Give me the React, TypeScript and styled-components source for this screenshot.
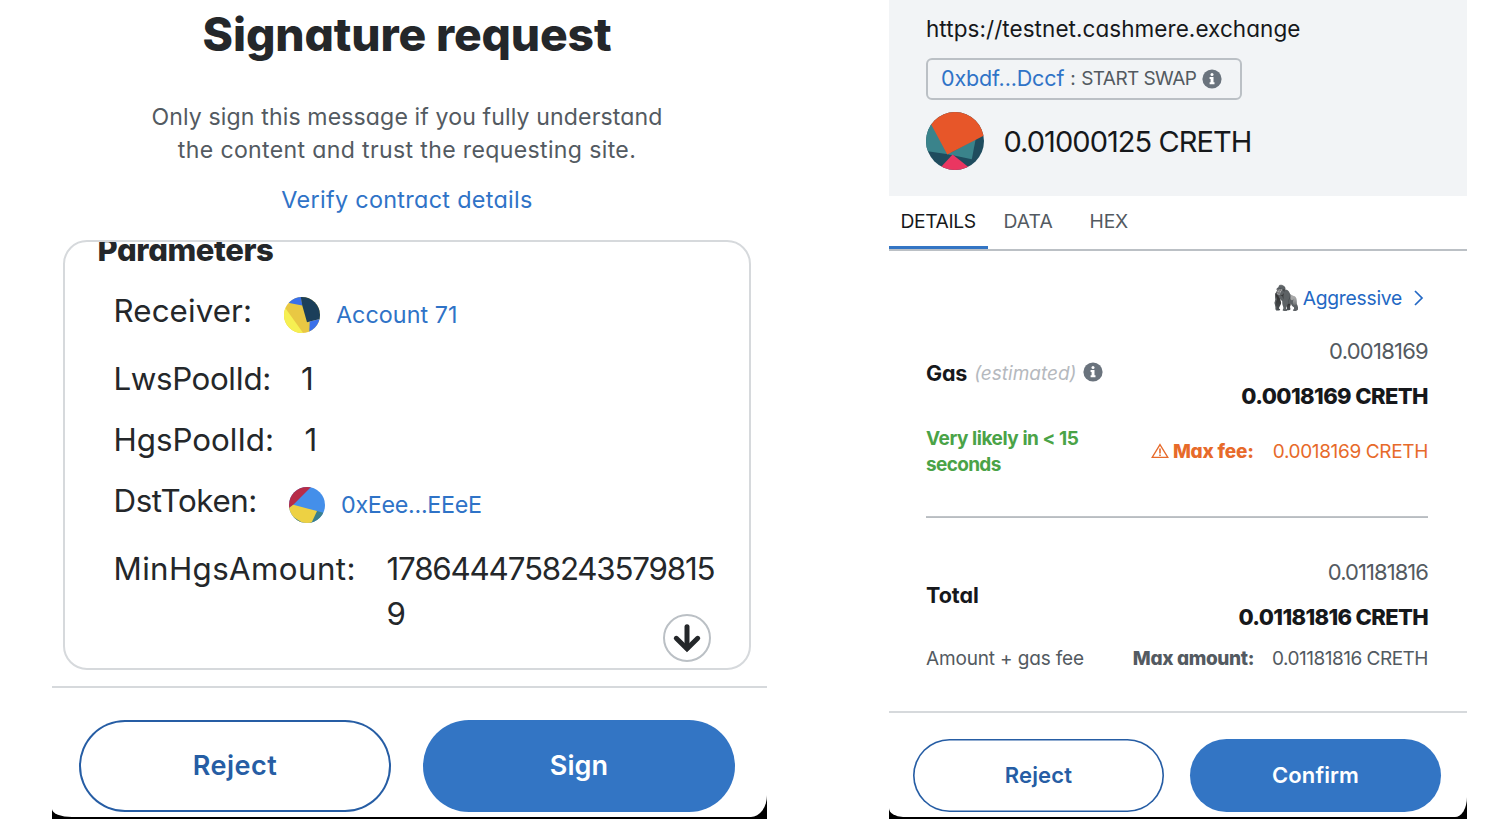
import React from 'react';
import styled, { createGlobalStyle } from 'styled-components';

const GlobalStyle = createGlobalStyle`
  * { box-sizing: border-box; }
  body {
    margin: 0;
    background: #fff;
    font-family: Inter, "Liberation Sans", sans-serif;
    font-feature-settings: "cv11";
    overflow: hidden;
  }
`;

const color = {
  ink: '#24272a',
  black: '#16181b',
  muted: '#535a61',
  link: '#2f73c7',
  primary: '#3375c4',
  outline: '#265da4',
  border: '#d6d9dc',
  borderStrong: '#bbc0c5',
  faint: '#b5b9be',
  success: '#4aa347',
  warning: '#e76a2a',
};

const Text = styled.span<{
  $size: number;
  $line?: number;
  $weight?: number;
  $color?: string;
  $track?: number;
  $italic?: boolean;
}>`
  display: block;
  margin: 0;
  white-space: nowrap;
  font-size: ${(p) => p.$size}px;
  line-height: ${(p) => (p.$line ? `${p.$line}px` : '1.3')};
  font-weight: ${(p) => p.$weight ?? 400};
  color: ${(p) => p.$color ?? color.ink};
  letter-spacing: ${(p) => p.$track ?? 0}px;
  font-style: ${(p) => (p.$italic ? 'italic' : 'normal')};
`;

const Page = styled.main`
  display: grid;
  grid-template-columns: 715px 578px;
  column-gap: 122px;
  padding-left: 52px;
  height: 819px;
`;

const Backdrop = styled.section`
  background: #000;
  height: 819px;
  padding-bottom: 2px;
`;

const Sheet = styled.div<{ $corners: string }>`
  display: flex;
  flex-direction: column;
  height: 817px;
  background: #fff;
  border-radius: ${(p) => p.$corners};
`;

const Intro = styled.header`
  display: flex;
  flex-direction: column;
  align-items: center;
  height: 240px;
  padding: 2px 5px 0 0;
`;

const Message = styled.div`
  display: flex;
  flex-direction: column;
  align-items: center;
  margin: 35px 0 16px;
`;

const Card = styled.div`
  position: relative;
  height: 430px;
  margin: 0 16px 0 11px;
  padding: 0 0 0 32.5px;
  border: 2px solid ${color.border};
  border-radius: 24px;
  overflow: hidden;
`;

const CardTitle = styled.div`
  margin: -15px 0 16px;
`;

const Rows = styled.div`
  display: flex;
  flex-direction: column;
  gap: 16px;
  padding-left: 16px;
`;

const Row = styled.div<{ $tall?: boolean }>`
  display: flex;
  height: ${(p) => (p.$tall ? 52 : 45)}px;
  padding-top: 1px;
`;

const RowLabel = styled.div<{ $width: number }>`
  flex: none;
  width: ${(p) => p.$width}px;
`;

const Address = styled.div`
  display: flex;
  align-items: center;
  gap: 16px;
  height: 52px;
`;

const ScrollDown = styled.button`
  position: absolute;
  right: 38px;
  bottom: 6px;
  width: 48px;
  height: 48px;
  padding: 0;
  border: 2px solid ${color.borderStrong};
  border-radius: 50%;
  background: #fff;
`;

const Footer = styled.footer<{ $compact?: boolean }>`
  display: flex;
  margin-top: ${(p) => (p.$compact ? -1 : 16)}px;
  gap: ${(p) => (p.$compact ? 26 : 32)}px;
  padding: ${(p) => (p.$compact ? '26px 26px 0 24px' : '32px 32px 0 27px')};
  border-top: 2px solid ${color.border};
`;

const Button = styled.button<{ $primary?: boolean; $compact?: boolean }>`
  flex: 1;
  display: flex;
  align-items: center;
  justify-content: center;
  height: ${(p) => (p.$compact ? 73 : 92)}px;
  padding: 0 0 ${(p) => (p.$compact ? 2 : 0)}px;
  border: 0;
  border-radius: 46px;
  background: ${(p) => (p.$primary ? color.primary : '#fff')};
  box-shadow: ${(p) =>
    p.$primary ? 'none' : `inset 0 0 0 ${p.$compact ? 1.6 : 2}px ${color.outline}`};
  font-family: inherit;
  font-feature-settings: inherit;
`;

const Summary = styled.header`
  display: flex;
  flex-direction: column;
  height: 196px;
  padding: 14px 37px 0;
  background: #f2f4f6;
`;

const Chip = styled.div`
  display: flex;
  align-items: center;
  align-self: flex-start;
  width: 316px;
  height: 42px;
  margin-top: 14px;
  padding-left: 13px;
  border: 2px solid ${color.borderStrong};
  border-radius: 6px;
`;

const ChipAction = styled.div`
  display: flex;
  align-items: center;
  gap: 5.5px;
  margin-left: 6px;

  svg { margin-top: -1px; }
`;

const Amount = styled.div`
  display: flex;
  align-items: center;
  gap: 19.5px;
  margin-top: 12.4px;
`;

const Tabs = styled.nav`
  display: flex;
  height: 55px;
  border-bottom: 2px solid ${color.borderStrong};
`;

const Tab = styled.div<{ $active?: boolean; $width: number; $pad: number }>`
  width: ${(p) => p.$width}px;
  padding: 12px 0 0 ${(p) => p.$pad}px;
  border-bottom: 3px solid ${(p) => (p.$active ? color.primary : 'transparent')};
`;

const Details = styled.div`
  height: 461px;
  padding: 33px 39px 0 37px;
`;

const Speed = styled.div`
  display: flex;
  align-items: center;
  justify-content: flex-end;
  height: 27px;
  padding-right: 4px;
`;

const Emoji = styled.span`
  width: 31px;
  font: 24px/28px "Noto Color Emoji", sans-serif;
`;

const Spread = styled.div<{ $top: number; $height: number }>`
  display: flex;
  align-items: center;
  justify-content: space-between;
  margin-top: ${(p) => p.$top}px;
  height: ${(p) => p.$height}px;
`;

const Stack = styled.div<{ $end?: boolean }>`
  display: flex;
  flex-direction: column;
  align-items: ${(p) => (p.$end ? 'flex-end' : 'flex-start')};
`;

const Inline = styled.div<{ $gap: number }>`
  display: flex;
  align-items: center;
  gap: ${(p) => p.$gap}px;
`;

const GasLabel = styled(Inline)`
  svg { margin: -5px 0 0 -1px; }
`;

const WarningLabel = styled(Inline)`
  svg { margin-top: -3px; }
`;

const Rule = styled.hr`
  height: 2px;
  margin: 37px 0 0;
  border: 0;
  background: linear-gradient(#c3c7cb, #b4b9be);
`;

const InfoIcon = () => (
  <svg width="20" height="20" viewBox="0 0 20 20">
    <circle cx="10" cy="10" r="9.6" fill="#6a737d" />
    <circle cx="10" cy="5.6" r="1.5" fill="#fff" />
    <path d="M7.6 8.1h3.9v5.2h1v1.9H7.6v-1.9h1V10h-1z" fill="#fff" />
  </svg>
);

const ArrowDownIcon = () => (
  <svg width="44" height="44" viewBox="2 2 44 44" fill="none" stroke={color.ink} strokeWidth="5" strokeLinecap="round" display="block">
    <path d="M24 12.8V34" />
    <path d="M13.3 24.3L24 34.8L34.7 24.3" />
  </svg>
);

const ChevronIcon = () => (
  <svg width="10" height="16" viewBox="0 0 10 16" fill="none" stroke="#2368c4" strokeWidth="1.7">
    <path d="M1 1L8 8L1 15" />
  </svg>
);

const WarningIcon = () => (
  <svg width="18" height="16" viewBox="0 0 18 16" fill="none" stroke={color.warning}>
    <path d="M9 1.6L16.8 14.4H1.2Z" strokeWidth="1.3" />
    <path d="M9 5.4V10.4M9 11.4V13" strokeWidth="1.6" />
  </svg>
);

const ReceiverAvatar = () => (
  <svg width="36" height="36" viewBox="0 0 36 36">
    <clipPath id="receiver"><circle cx="18" cy="18" r="18" /></clipPath>
    <g clipPath="url(#receiver)">
      <rect width="36" height="36" fill="#e9c843" />
      <path d="M0 9.3L19.5 36.5H0Z" fill="#f6f052" />
      <path d="M5.3 6L18.3 8.4L16.7 -2H0Z" fill="#3a70ea" />
      <path d="M16.6 -1L18.3 8.4L23 25.3L37 21.8V-1Z" fill="#1b3f5a" />
      <path d="M25.7 24.6L37 21.8V37H25.2Z" fill="#3a70ea" />
    </g>
  </svg>
);

const TokenAvatar = () => (
  <svg width="36" height="36" viewBox="0 0 36 36">
    <clipPath id="token"><circle cx="18" cy="18" r="18" /></clipPath>
    <g clipPath="url(#token)">
      <rect width="36" height="36" fill="#448fea" />
      <path d="M-1 22L4.3 17.7L23 -1H-1Z" fill="#b72c48" />
      <path d="M27 23.8L37 26.5V37H20Z" fill="#3a7f8b" />
      <path d="M4.3 17.7L28 24.1L22 37H-1V21.7Z" fill="#edd143" />
      <path d="M4 29.8L15 36.8H0Z" fill="#3a7f8b" />
    </g>
  </svg>
);

const AmountAvatar = () => (
  <svg width="58" height="58" viewBox="0 0 58 58">
    <clipPath id="amount"><circle cx="29" cy="29" r="29" /></clipPath>
    <g clipPath="url(#amount)">
      <rect width="58" height="58" fill="#1f4c5e" />
      <path d="M-1 38.8L27 43L5 10L-1 12Z" fill="#3a838b" />
      <path d="M22 42.3L45.8 47.2L49.7 27Z" fill="#3a838b" />
      <path d="M5.2 12.5L21.3 42.5L59 23V-1H0Z" fill="#e75629" />
      <path d="M26.6 42.6L15 55V59H43V55.5Z" fill="#ea3661" />
    </g>
  </svg>
);

const SignatureRequest = () => (
  <Backdrop>
    <Sheet $corners="0 0 16px 20px / 0 0 22px 8px">
      <Intro>
        <Text as="h1" $size={46.2} $line={64} $weight={800} $track={-0.15}>Signature request</Text>
        <Message>
          <Text $size={23.1} $line={33} $color={color.muted} $track={0.12}>
            Only sign this message if you fully understand
          </Text>
          <Text $size={23.1} $line={33} $color={color.muted} $track={0.34}>
            the content and trust the requesting site.
          </Text>
        </Message>
        <Text $size={23.4} $line={33} $color={color.link} $track={0.3}>Verify contract details</Text>
      </Intro>
      <Card>
        <CardTitle>
          <Text $size={31} $line={45} $weight={800} $track={-0.4}>Parameters</Text>
        </CardTitle>
        <Rows>
          <Row $tall>
            <RowLabel $width={170.5}><Text $size={31.3} $line={45} $track={0.1}>Receiver:</Text></RowLabel>
            <Address>
              <ReceiverAvatar />
              <Text $size={23.3} $color={color.link} $track={0.05}>Account 71</Text>
            </Address>
          </Row>
          <Row>
            <RowLabel $width={187.5}><Text $size={31.3} $line={45} $track={-0.4}>LwsPoolId:</Text></RowLabel>
            <Text $size={31.3} $line={45}>1</Text>
          </Row>
          <Row>
            <RowLabel $width={191}><Text $size={31.3} $line={45}>HgsPoolId:</Text></RowLabel>
            <Text $size={31.3} $line={45}>1</Text>
          </Row>
          <Row $tall>
            <RowLabel $width={175.5}><Text $size={31.3} $line={45} $track={-0.4}>DstToken:</Text></RowLabel>
            <Address>
              <TokenAvatar />
              <Text $size={23.3} $color={color.link} $track={-0.3}>0xEee...EEeE</Text>
            </Address>
          </Row>
          <Row>
            <RowLabel $width={273}><Text $size={31.3} $line={45} $track={0.38}>MinHgsAmount:</Text></RowLabel>
            <Text $size={31.3} $line={45} $track={-1.18}>1786444758243579815<br />9</Text>
          </Row>
        </Rows>
        <ScrollDown aria-label="Scroll down"><ArrowDownIcon /></ScrollDown>
      </Card>
      <Footer>
        <Button><Text $size={27} $weight={600} $color={color.outline} $track={0.5}>Reject</Text></Button>
        <Button $primary><Text $size={27} $weight={600} $color="#fff" $track={0.1}>Sign</Text></Button>
      </Footer>
    </Sheet>
  </Backdrop>
);

const SwapConfirmation = () => (
  <Backdrop>
    <Sheet $corners="0 0 12px 14px / 0 0 20px 9px">
      <Summary>
        <Text $size={22.5} $line={30} $color={color.black} $track={0.06}>https://testnet.cashmere.exchange</Text>
        <Chip>
          <Text $size={21.5} $color={color.link} $track={-0.15}>0xbdf...Dccf</Text>
          <ChipAction>
            <Text $size={19} $color={color.muted}>:</Text>
            <Text $size={19} $color={color.muted} $track={-0.58}>START SWAP</Text>
            <InfoIcon />
          </ChipAction>
        </Chip>
        <Amount>
          <AmountAvatar />
          <Text $size={29} $line={41} $color={color.black} $track={-0.95}>0.01000125 CRETH</Text>
        </Amount>
      </Summary>
      <Tabs>
        <Tab $active $width={99} $pad={11.5}><Text $size={19.3} $line={26} $color={color.black} $track={-0.4}>DETAILS</Text></Tab>
        <Tab $width={86} $pad={15.5}><Text $size={19.3} $line={26} $color={color.muted} $track={0.1}>DATA</Text></Tab>
        <Tab $width={80} $pad={15.5}><Text $size={19.3} $line={26} $color={color.muted} $track={-0.2}>HEX</Text></Tab>
      </Tabs>
      <Details>
        <Speed>
          <Emoji>🦍</Emoji>
          <Inline $gap={12}>
            <Text $size={19.3} $line={26} $color="#2368c4" $track={-0.25}>Aggressive</Text>
            <ChevronIcon />
          </Inline>
        </Speed>
        <Spread $top={18} $height={90}>
          <GasLabel $gap={7}>
            <Text $size={21.5} $weight={750} $color={color.black} $track={-0.2}>Gas</Text>
            <Text $size={19} $italic $color={color.faint}>(estimated)</Text>
            <InfoIcon />
          </GasLabel>
          <Stack $end>
            <Text $size={22} $line={45} $color={color.muted} $track={-0.75}>0.0018169</Text>
            <Text $size={22} $line={45} $weight={800} $color={color.black} $track={-0.6}>0.0018169 CRETH</Text>
          </Stack>
        </Spread>
        <Spread $top={6} $height={54}>
          <Stack>
            <Text $size={19} $line={26.5} $weight={700} $color={color.success} $track={-0.45}>Very likely in &lt; 15</Text>
            <Text $size={19} $line={26.5} $weight={700} $color={color.success} $track={-0.65}>seconds</Text>
          </Stack>
          <Inline $gap={19}>
            <WarningLabel $gap={4}>
              <WarningIcon />
              <Text $size={19} $line={26} $weight={800} $color={color.warning} $track={-0.2}>Max fee:</Text>
            </WarningLabel>
            <Text $size={19} $line={26} $color={color.warning} $track={-0.35}>0.0018169 CRETH</Text>
          </Inline>
        </Spread>
        <Rule />
        <Spread $top={32} $height={90}>
          <Text $size={21.5} $line={30} $weight={750} $color={color.black}>Total</Text>
          <Stack $end>
            <Text $size={22} $line={45} $color={color.muted} $track={-0.95}>0.01181816</Text>
            <Text $size={22} $line={45} $weight={800} $color={color.black} $track={-0.65}>0.01181816 CRETH</Text>
          </Stack>
        </Spread>
        <Spread $top={4} $height={30}>
          <Text $size={19} $color={color.muted} $track={-0.15}>Amount + gas fee</Text>
          <Inline $gap={18}>
            <Text $size={19} $weight={800} $color={color.muted} $track={-0.35}>Max amount:</Text>
            <Text $size={19} $color={color.muted} $track={-0.5}>0.01181816 CRETH</Text>
          </Inline>
        </Spread>
      </Details>
      <Footer $compact>
        <Button $compact><Text $size={22} $line={30} $weight={600} $color={color.outline} $track={0.2}>Reject</Text></Button>
        <Button $compact $primary><Text $size={22} $line={30} $weight={600} $color="#fff" $track={0.1}>Confirm</Text></Button>
      </Footer>
    </Sheet>
  </Backdrop>
);

export default function App() {
  return (
    <>
      <GlobalStyle />
      <Page>
        <SignatureRequest />
        <SwapConfirmation />
      </Page>
    </>
  );
}
